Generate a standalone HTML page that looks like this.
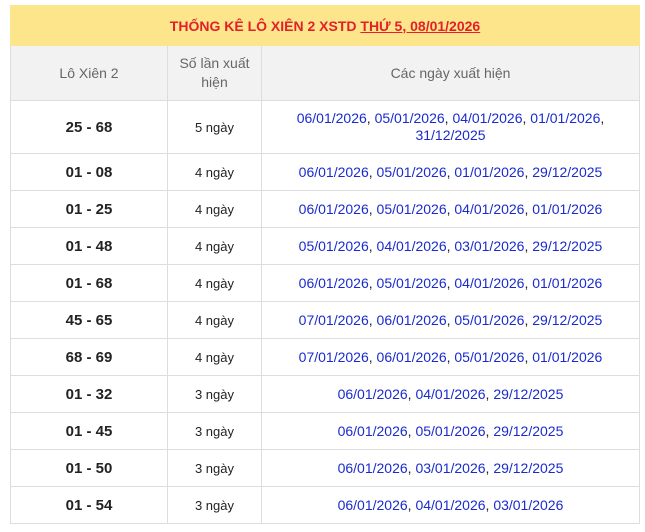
<!DOCTYPE html>
<html><head><meta charset="utf-8"><style>
body{margin:0;background:#fff;font-family:"Liberation Sans",Arial,sans-serif;}
table{position:absolute;left:10px;top:5px;width:630px;border-collapse:collapse;table-layout:fixed;}
td,th{border:1px solid #ddd;text-align:center;padding:0;}
.t{background:#fde58c;height:39px;color:#e3202a;font-weight:bold;font-size:14px;border-color:#fde58c;}
.t u{text-decoration:underline;}
th{background:#f2f2f2;font-weight:normal;color:#666;font-size:14px;height:54px;line-height:19px;}
td{height:36px;font-size:14px;color:#222;}
td.a{font-weight:bold;font-size:15px;}
td.b{font-size:13px;}
td.c{color:#222;line-height:17px;}
td.c span{color:#1a2bcc;}
</style></head><body>
<table>
<col style="width:157px"><col style="width:94px"><col>
<tr><td colspan="3" class="t">THỐNG KÊ LÔ XIÊN 2 XSTD <u>THỨ 5, 08/01/2026</u></td></tr>
<tr><th>Lô Xiên 2</th><th>Số lần xuất<br>hiện</th><th>Các ngày xuất hiện</th></tr>
<tr><td class="a" style="height:52px">25 - 68</td><td class="b">5 ngày</td><td class="c"><span>06/01/2026</span>, <span>05/01/2026</span>, <span>04/01/2026</span>, <span>01/01/2026</span>,<br><span>31/12/2025</span></td></tr>
<tr><td class="a">01 - 08</td><td class="b">4 ngày</td><td class="c"><span>06/01/2026</span>, <span>05/01/2026</span>, <span>01/01/2026</span>, <span>29/12/2025</span></td></tr>
<tr><td class="a">01 - 25</td><td class="b">4 ngày</td><td class="c"><span>06/01/2026</span>, <span>05/01/2026</span>, <span>04/01/2026</span>, <span>01/01/2026</span></td></tr>
<tr><td class="a">01 - 48</td><td class="b">4 ngày</td><td class="c"><span>05/01/2026</span>, <span>04/01/2026</span>, <span>03/01/2026</span>, <span>29/12/2025</span></td></tr>
<tr><td class="a">01 - 68</td><td class="b">4 ngày</td><td class="c"><span>06/01/2026</span>, <span>05/01/2026</span>, <span>04/01/2026</span>, <span>01/01/2026</span></td></tr>
<tr><td class="a">45 - 65</td><td class="b">4 ngày</td><td class="c"><span>07/01/2026</span>, <span>06/01/2026</span>, <span>05/01/2026</span>, <span>29/12/2025</span></td></tr>
<tr><td class="a">68 - 69</td><td class="b">4 ngày</td><td class="c"><span>07/01/2026</span>, <span>06/01/2026</span>, <span>05/01/2026</span>, <span>01/01/2026</span></td></tr>
<tr><td class="a">01 - 32</td><td class="b">3 ngày</td><td class="c"><span>06/01/2026</span>, <span>04/01/2026</span>, <span>29/12/2025</span></td></tr>
<tr><td class="a">01 - 45</td><td class="b">3 ngày</td><td class="c"><span>06/01/2026</span>, <span>05/01/2026</span>, <span>29/12/2025</span></td></tr>
<tr><td class="a">01 - 50</td><td class="b">3 ngày</td><td class="c"><span>06/01/2026</span>, <span>03/01/2026</span>, <span>29/12/2025</span></td></tr>
<tr><td class="a">01 - 54</td><td class="b">3 ngày</td><td class="c"><span>06/01/2026</span>, <span>04/01/2026</span>, <span>03/01/2026</span></td></tr>
</table>
</body></html>
